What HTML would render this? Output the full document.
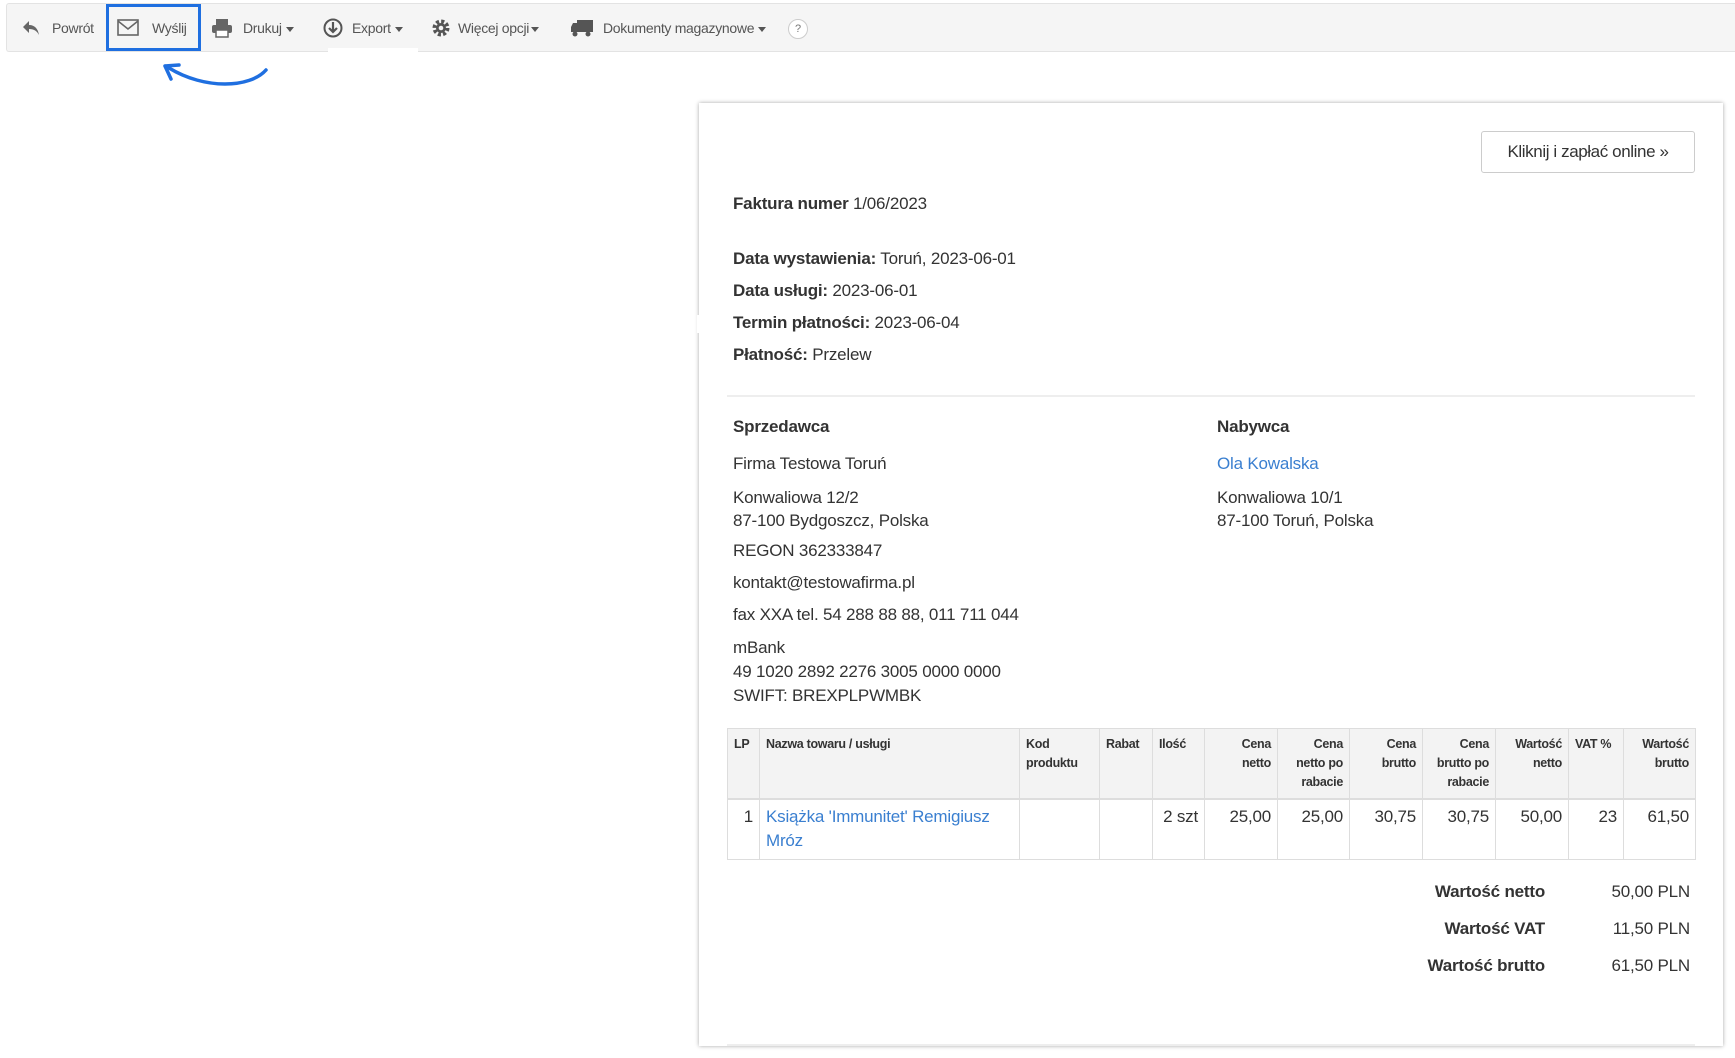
<!DOCTYPE html>
<html><head><meta charset="utf-8"><style>
html,body{margin:0;width:1735px;height:1058px;overflow:hidden}
body{background:#fff;font-family:"Liberation Sans",sans-serif;color:#333;position:relative}
.a{position:absolute;white-space:nowrap}
.tb{position:absolute;left:6px;top:3px;width:1729px;height:49px;background:#f5f5f5;border:1px solid #e3e3e3;border-right:none;box-sizing:border-box;border-radius:3px 0 0 3px}
.ti{position:absolute;top:20px;font-size:14px;color:#555;letter-spacing:-0.3px}
.car{display:inline-block;width:0;height:0;border-left:4px solid transparent;border-right:4px solid transparent;border-top:5px solid #555;vertical-align:middle;margin-left:4px}
.t{font-size:17px;letter-spacing:-0.2px;color:#333}
b{font-weight:bold}
.card{position:absolute;left:699px;top:103px;width:1024px;height:943px;background:#fff;box-shadow:0 0 4px rgba(0,0,0,.35)}
table{position:absolute;left:727px;top:728px;border-collapse:collapse;width:968px;table-layout:fixed}
th,td{border:1px solid #ddd;padding:6px 6px;vertical-align:top}
th{background:#f3f3f3;font-size:12.5px;line-height:19px;text-align:right;height:56px;letter-spacing:-0.3px;border-bottom:2px solid #ddd}
td{font-size:17px;line-height:24px;text-align:right;height:48px;letter-spacing:-0.2px;padding-top:5px}
.l{text-align:left}
a{color:#3a7fd0;text-decoration:none}
</style></head><body>
<div class="tb"></div>
<div class="a" style="left:328px;top:48px;width:90px;height:6px;background:#fff"></div>
<div class="a" style="left:106px;top:4px;width:95px;height:47px;border:3px solid #1f6fe0;box-sizing:border-box"></div>
<svg class="a" style="left:21px;top:19px" width="20" height="18" viewBox="0 0 20 18"><path d="M8 2 L2 8 L8 14 V10 C13 10 16 12 18 16 C17 10 14 6 8 6 Z" fill="#666"/></svg>
<div class="ti" style="left:52px">Powrót</div>
<svg class="a" style="left:117px;top:19px" width="22" height="17" viewBox="0 0 22 17"><rect x="1" y="1" width="20" height="15" fill="none" stroke="#666" stroke-width="1.6"/><path d="M1 2 L11 10 L21 2" fill="none" stroke="#666" stroke-width="1.6"/></svg>
<div class="ti" style="left:152px">Wyślij</div>
<svg class="a" style="left:211px;top:18px" width="22" height="20" viewBox="0 0 22 20"><rect x="5" y="1" width="12" height="6" fill="#666"/><rect x="1" y="7" width="20" height="8" rx="2" fill="#666"/><rect x="5" y="12" width="12" height="7" fill="#fff" stroke="#666" stroke-width="1.5"/></svg>
<div class="ti" style="left:243px">Drukuj<span class="car"></span></div>
<svg class="a" style="left:323px;top:18px" width="20" height="20" viewBox="0 0 20 20"><circle cx="10" cy="10" r="8.5" fill="none" stroke="#555" stroke-width="2"/><path d="M10 4 V13 M6 10 L10 14 L14 10" fill="none" stroke="#555" stroke-width="2.2"/></svg>
<div class="ti" style="left:352px">Export<span class="car"></span></div>
<svg class="a" style="left:431px;top:18px" width="20" height="20" viewBox="0 0 20 20"><circle cx="10" cy="10" r="6.5" fill="none" stroke="#555" stroke-width="4" stroke-dasharray="3 2.1"/><circle cx="10" cy="10" r="5" fill="#555"/><circle cx="10" cy="10" r="2.3" fill="#f5f5f5"/></svg>
<div class="ti" style="left:458px">Więcej opcji<span class="car" style="margin-left:2px"></span></div>
<svg class="a" style="left:570px;top:18px" width="24" height="20" viewBox="0 0 24 20"><rect x="7" y="2" width="16" height="12" fill="#555"/><path d="M1 14 V9 L3 5 H7 V14 Z" fill="#555"/><circle cx="5" cy="16" r="2.5" fill="#555"/><circle cx="18" cy="16" r="2.5" fill="#555"/></svg>
<div class="ti" style="left:603px">Dokumenty magazynowe<span class="car"></span></div>
<div class="a" style="left:788px;top:19px;width:18px;height:18px;border:1px solid #ccc;border-radius:50%;background:#fff;font-size:11px;color:#777;text-align:center;line-height:18px">?</div>
<svg class="a" style="left:155px;top:58px" width="120" height="40" viewBox="0 0 120 40"><path d="M111 12 C95 30 50 32 14 10" fill="none" stroke="#1f6fe0" stroke-width="3.5" stroke-linecap="round"/><path d="M10 8 L24 7 M10 8 L16 21" fill="none" stroke="#1f6fe0" stroke-width="3.5" stroke-linecap="round"/></svg>

<div class="card"></div>
<div class="a" style="left:697px;top:315px;width:4px;height:18px;background:#fff"></div>
<div class="a" style="left:1481px;top:131px;width:214px;height:42px;border:1px solid #ccc;border-radius:3px;box-sizing:border-box;font-size:17px;letter-spacing:-0.4px;text-align:center;line-height:40px;color:#333">Kliknij i zapłać online »</div>
<div class="a t" style="left:733px;top:194px"><b>Faktura numer</b> 1/06/2023</div>
<div class="a t" style="left:733px;top:249px"><b>Data wystawienia:</b> Toruń, 2023-06-01</div>
<div class="a t" style="left:733px;top:281px"><b>Data usługi:</b> 2023-06-01</div>
<div class="a t" style="left:733px;top:313px"><b>Termin płatności:</b> 2023-06-04</div>
<div class="a t" style="left:733px;top:345px"><b>Płatność:</b> Przelew</div>
<div class="a" style="left:727px;top:395px;width:968px;height:2px;background:#eee"></div>
<div class="a t" style="left:733px;top:417px"><b>Sprzedawca</b></div>
<div class="a t" style="left:733px;top:454px">Firma Testowa Toruń</div>
<div class="a t" style="left:733px;top:486px;line-height:23px">Konwaliowa 12/2<br>87-100 Bydgoszcz, Polska</div>
<div class="a t" style="left:733px;top:541px">REGON 362333847</div>
<div class="a t" style="left:733px;top:573px">kontakt@testowafirma.pl</div>
<div class="a t" style="left:733px;top:605px">fax XXA tel. 54 288 88 88, 011 711 044</div>
<div class="a t" style="left:733px;top:636px;line-height:24px">mBank<br>49 1020 2892 2276 3005 0000 0000<br>SWIFT: BREXPLPWMBK</div>
<div class="a t" style="left:1217px;top:417px"><b>Nabywca</b></div>
<div class="a t" style="left:1217px;top:454px"><a>Ola Kowalska</a></div>
<div class="a t" style="left:1217px;top:486px;line-height:23px">Konwaliowa 10/1<br>87-100 Toruń, Polska</div>
<table>
<colgroup><col style="width:32px"><col style="width:260px"><col style="width:80px"><col style="width:53px"><col style="width:52px"><col style="width:73px"><col style="width:72px"><col style="width:73px"><col style="width:73px"><col style="width:73px"><col style="width:55px"><col style="width:72px"></colgroup>
<tr><th class="l">LP</th><th class="l">Nazwa towaru / usługi</th><th class="l">Kod produktu</th><th class="l">Rabat</th><th class="l">Ilość</th><th>Cena netto</th><th>Cena netto po rabacie</th><th>Cena brutto</th><th>Cena brutto po rabacie</th><th>Wartość netto</th><th class="l">VAT %</th><th>Wartość brutto</th></tr>
<tr><td>1</td><td class="l"><a>Książka 'Immunitet' Remigiusz Mróz</a></td><td></td><td></td><td>2 szt</td><td>25,00</td><td>25,00</td><td>30,75</td><td>30,75</td><td>50,00</td><td>23</td><td>61,50</td></tr>
</table>
<div class="a t" style="right:190px;top:882px"><b>Wartość netto</b></div>
<div class="a t" style="right:45px;top:882px">50,00 PLN</div>
<div class="a t" style="right:190px;top:919px"><b>Wartość VAT</b></div>
<div class="a t" style="right:45px;top:919px">11,50 PLN</div>
<div class="a t" style="right:190px;top:956px"><b>Wartość brutto</b></div>
<div class="a t" style="right:45px;top:956px">61,50 PLN</div>
<div class="a" style="left:727px;top:1044px;width:968px;height:2px;background:#eee"></div>
</body></html>
